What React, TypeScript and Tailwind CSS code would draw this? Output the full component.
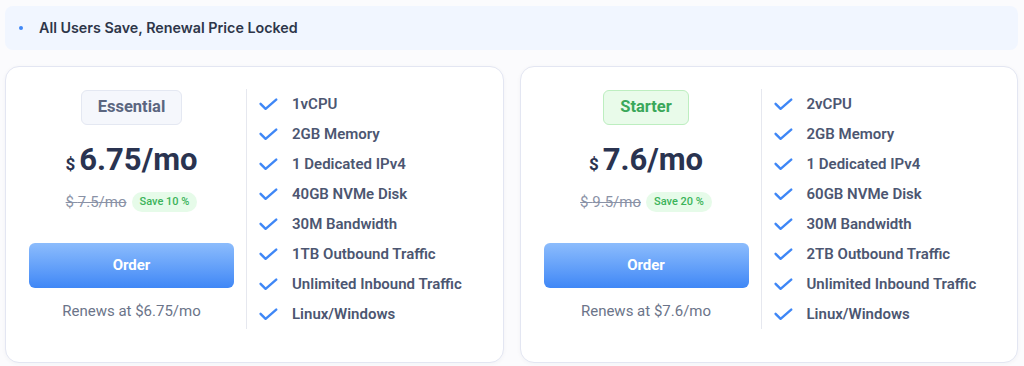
const PLANS = [
  {
    name: "Essential",
    tone: "gray",
    price: "6.75",
    old: "7.5",
    save: "10",
    features: ["1vCPU", "2GB Memory", "1 Dedicated IPv4", "40GB NVMe Disk", "30M Bandwidth", "1TB Outbound Traffic", "Unlimited Inbound Traffic", "Linux/Windows"],
  },
  {
    name: "Starter",
    tone: "green",
    price: "7.6",
    old: "9.5",
    save: "20",
    features: ["2vCPU", "2GB Memory", "1 Dedicated IPv4", "60GB NVMe Disk", "30M Bandwidth", "2TB Outbound Traffic", "Unlimited Inbound Traffic", "Linux/Windows"],
  },
];

type Plan = (typeof PLANS)[number];

function CheckMark() {
  return (
    <svg width="19" height="13" viewBox="0 0 19 13" fill="none" stroke="#3f87f6" strokeWidth="2.4" strokeLinecap="round" strokeLinejoin="round" className="shrink-0">
      <path d="M1.6 5.8 6.6 10.8 17.2 1.6" />
    </svg>
  );
}

function PlanCard({ plan }: { plan: Plan }) {
  const badge =
    plan.tone === "green"
      ? "bg-[#e9fbea] border-[#bdeec0] text-[#3aa85a]"
      : "bg-[#f5f7fc] border-[#e4e8f2] text-[#5b6680]";

  return (
    <div className="flex-1 flex bg-white border border-[#e3e6f2] rounded-[14px] pt-[22px] pb-[33px] pl-[23px] shadow-[0_1px_4px_rgba(30,40,80,0.04)]">
      {/* Left: name, price, order */}
      <div className="w-[205px] shrink-0 flex flex-col items-center pt-px">
        <div className={`h-[35px] px-[16px] flex items-center rounded-md border text-[16.5px] font-bold ${badge}`}>
          {plan.name}
        </div>
        <div className="mt-[17px] flex items-baseline text-[#2a3350] font-bold">
          <span className="text-[17px] mr-[4px]">$</span>
          <span className="text-[31px] leading-[36px]">{plan.price}/mo</span>
        </div>
        <div className="mt-[13px] flex items-center gap-[5px]">
          <span className="text-[15px] text-[#8a92a6] line-through">$ {plan.old}/mo</span>
          <span className="h-[20px] px-[8px] flex items-center rounded-full bg-[#e6fbe9] text-[#3bb35a] text-[11px] font-medium">
            Save {plan.save} %
          </span>
        </div>
        <button className="mt-[29px] w-full h-[45px] rounded-md bg-gradient-to-b from-[#8cbcfc] to-[#3f87f6] text-white text-[15px] font-bold">
          Order
        </button>
        <div className="mt-[12px] text-[15px] text-[#6b7489]">Renews at ${plan.price}/mo</div>
      </div>

      {/* Right: features */}
      <div className="ml-[12px] border-l border-[#e6e8ef] pl-[12px] flex flex-col">
        {plan.features.map(f => (
          <div key={f} className="h-[30px] flex items-center">
            <CheckMark />
            <span className="ml-[14px] text-[15px] font-semibold text-[#4c5671]">{f}</span>
          </div>
        ))}
      </div>
    </div>
  );
}

export default function App() {
  return (
    <div className="w-[1024px] h-[366px] bg-[#fbfbfd] px-[5px] pt-[6px]" style={{ fontFamily: "Roboto, 'Liberation Sans', sans-serif" }}>
      <div className="h-[44px] rounded-[8px] bg-[#f1f6ff] flex items-center pl-[14px] mr-[1px]">
        <span className="w-[4px] h-[4px] rounded-full bg-[#3f87f6]" />
        <span className="ml-[16px] text-[14.3px] font-semibold text-[#2e364a]" style={{ fontFamily: "Inter, sans-serif" }}>
          All Users Save, Renewal Price Locked
        </span>
      </div>
      <div className="mt-[16px] flex gap-[16px] mr-[1px]">
        {PLANS.map(p => (
          <PlanCard key={p.name} plan={p} />
        ))}
      </div>
    </div>
  );
}
